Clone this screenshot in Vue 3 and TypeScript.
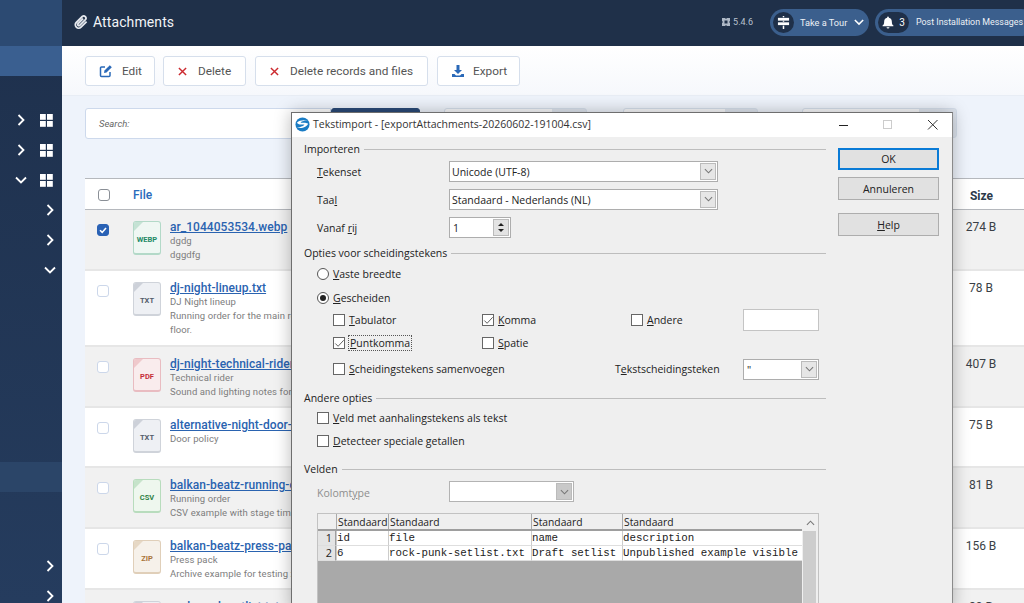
<script setup lang="ts">
interface Row { name: string; t1: string; t2?: string; t3?: string; ext: string; kind: string; size: string; checked?: boolean }
const rows: Row[] = [
  { name: 'ar_1044053534.webp', t1: 'dgdg', t2: 'dggdfg', ext: 'WEBP', kind: 'webp', size: '274 B', checked: true },
  { name: 'dj-night-lineup.txt', t1: 'DJ Night lineup', t2: 'Running order for the main room', t3: 'floor.', ext: 'TXT', kind: 'txt', size: '78 B' },
  { name: 'dj-night-technical-rider.pdf', t1: 'Technical rider', t2: 'Sound and lighting notes for the', ext: 'PDF', kind: 'pdf', size: '407 B' },
  { name: 'alternative-night-door-policy.txt', t1: 'Door policy', ext: 'TXT', kind: 'txt', size: '75 B' },
  { name: 'balkan-beatz-running-order.csv', t1: 'Running order', t2: 'CSV example with stage times', ext: 'CSV', kind: 'csv', size: '81 B' },
  { name: 'balkan-beatz-press-pack.zip', t1: 'Press pack', t2: 'Archive example for testing zip', ext: 'ZIP', kind: 'zip', size: '156 B' },
  { name: 'rock-punk-setlist.txt', t1: 'Draft setlist', ext: 'TXT', kind: 'txt', size: '89 B' }
]
const side = [
  { c: 'r', g: true }, { c: 'r', g: true }, { c: 'd', g: true },
  { c: 'r', sub: true }, { c: 'r', sub: true }, { c: 'd', sub: true }
]
const filters = [
  { w: 89, dark: true, gap: 24 },
  { w: 143, gap: 36 },
  { w: 135, gap: 44 },
  { w: 155, gap: 0 }
]
</script>

<template>
  <div class="page">
    <aside class="side">
      <div class="logo"></div>
      <div class="active"></div>
      <div class="menu">
        <div v-for="(s, i) in side" :key="i" class="mi" :class="{ sub: s.sub }">
          <svg class="chev" viewBox="0 0 12 12" width="12" height="12">
            <path v-if="s.c === 'r'" d="M3.5 1 8.5 6 3.5 11" />
            <path v-else d="M1 3.5 6 8.5 11 3.5" />
          </svg>
          <svg v-if="s.g" class="grid" viewBox="0 0 13 13" width="13" height="13">
            <rect x="0" y="0" width="5.8" height="5.8" /><rect x="7" y="0" width="5.8" height="5.8" />
            <rect x="0" y="7" width="5.8" height="5.8" /><rect x="7" y="7" width="5.8" height="5.8" />
          </svg>
        </div>
      </div>
      <div class="hilite"></div>
      <div class="mi sub low">
        <svg class="chev" viewBox="0 0 12 12" width="12" height="12"><path d="M3.5 1 8.5 6 3.5 11" /></svg>
      </div>
      <div class="mi sub">
        <svg class="chev" viewBox="0 0 12 12" width="12" height="12"><path d="M3.5 1 8.5 6 3.5 11" /></svg>
      </div>
    </aside>

    <main class="main">
      <header class="top">
        <svg class="clip" viewBox="0 0 16 16" width="16" height="16">
          <path d="M13.6 7.6 8 13.2a3.3 3.3 0 0 1-4.7-4.7l6-6a2.2 2.2 0 0 1 3.1 3.1l-5.7 5.7a1.1 1.1 0 0 1-1.6-1.6l5-5" />
        </svg>
        <span class="title">Attachments</span>
        <span class="spacer"></span>
        <span class="ver">
          <svg viewBox="0 0 10 10" width="10" height="10"><path d="M1 1h3l1 1 1-1h3v3L8 5l1 1v3H6L5 8 4 9H1V6l1-1-1-1zM3.500 3.500v3h3v-3z" /></svg>
          5.4.6
        </span>
        <span class="pill tour">
          <span class="disc">
            <svg viewBox="0 0 14 14" width="13" height="13">
              <rect x="6.200" y="0" width="1.600" height="1.400" />
              <rect x="1" y="2" width="12" height="3" />
              <rect x="6.200" y="5" width="1.600" height="1.200" />
              <rect x="1" y="6.800" width="12" height="3" />
              <rect x="6.200" y="10.400" width="1.600" height="3.600" />
            </svg>
          </span>
          <span class="ptext">Take a Tour</span>
          <svg class="pchev" viewBox="0 0 12 12" width="10" height="10"><path d="M1 3.500 6 8.500 11 3.500" /></svg>
        </span>
        <span class="pill post">
          <span class="disc wide">
            <svg viewBox="0 0 14 14" width="12" height="13"><path d="M7 0a1 1 0 0 1 1 1v.6c2.200.4 3.500 2.200 3.500 4.400 0 2.500.7 3.400 1.800 4.600.3.400 0 .9-.4.900H1.100c-.5 0-.7-.5-.4-.9C1.800 9.400 2.500 8.500 2.500 6c0-2.200 1.300-4 3.500-4.400V1a1 1 0 0 1 1-1zM5.300 12.500h3.400a1.700 1.500 0 0 1-3.400 0z" /></svg>
            <span class="num">3</span>
          </span>
          <span class="ptext">Post Installation Messages</span>
        </span>
      </header>

      <div class="toolbar">
        <button class="tb ed">
          <svg viewBox="0 0 14 14" width="14" height="14"><path class="ib" d="M11 8v3.500a1 1 0 0 1-1 1H2.500a1 1 0 0 1-1-1V4a1 1 0 0 1 1-1H6" /><path class="ibf" d="M5.500 6.500 10.800 1.200l2 2L7.500 8.500l-2.500.5z" /></svg>
          Edit
        </button>
        <button class="tb del">
          <svg viewBox="0 0 10 10" width="9" height="9"><path class="ix" d="M1 1 9 9M9 1 1 9" /></svg>
          <span class="pl">Delete</span>
        </button>
        <button class="tb dr">
          <svg viewBox="0 0 10 10" width="9" height="9"><path class="ix" d="M1 1 9 9M9 1 1 9" /></svg>
          <span class="pl">Delete records and files</span>
        </button>
        <button class="tb ex">
          <svg viewBox="0 0 14 14" width="14" height="14"><path class="ibf" d="M5.500 1h3v5h2.500L7 10 3 6h2.500zM1 10h2.500L5 11.500h4L10.500 10H13v3H1z" /></svg>
          <span>Export</span>
        </button>
      </div>

      <div class="content">
        <div class="searchrow">
          <div class="search">Search:</div>
          <div v-for="(f, i) in filters" :key="i" class="filter" :class="{ dark: f.dark }" :style="{ width: f.w + 'px', marginRight: f.gap + 'px' }"></div>
        </div>

        <div class="table">
          <div class="thead">
            <span class="cb hd"></span>
            <span class="thfile">File</span>
            <span class="thsize">Size</span>
          </div>
          <div v-for="(r, i) in rows" :key="i" class="row" :class="{ alt: i % 2 === 0 }">
            <span class="cb" :class="{ on: r.checked }">
              <svg v-if="r.checked" viewBox="0 0 12 12" width="12" height="12"><path d="M3 6.200 5.200 8.400 9 4" /></svg>
            </span>
            <span class="fi" :class="r.kind"><span class="fold"></span>{{ r.ext }}</span>
            <div class="info">
              <a class="fname">{{ r.name }}</a>
              <div class="sm">{{ r.t1 }}</div>
              <div v-if="r.t2" class="sm">{{ r.t2 }}</div>
              <div v-if="r.t3" class="sm t3">{{ r.t3 }}</div>
            </div>
            <span class="size">{{ r.size }}</span>
          </div>
        </div>
      </div>
    </main>

    <section class="dlg">
      <div class="dtitle">
        <svg class="lo" viewBox="0 0 16 16" width="15" height="15">
          <circle cx="8" cy="8" r="7.500" fill="#1a7cc4" />
          <path d="M2 6c3-3 8-3 12-2-3 0-7 0-8 2 3 0 7 0 8 1-1 4-8 6-12 4 3 0 7-1 8-3-3 0-7 0-8-2z" fill="#fff" />
        </svg>
        <span class="dt">Tekstimport - [exportAttachments-20260602-191004.csv]</span>
        <svg class="wb wmin" viewBox="0 0 12 12" width="12" height="12"><path d="M1 6.500h9" stroke="#222" /></svg>
        <svg class="wb wmax" viewBox="0 0 12 12" width="12" height="12"><rect x="1.500" y="1.500" width="8" height="8" fill="none" stroke="#ccc" /></svg>
        <svg class="wb last" viewBox="0 0 12 12" width="12" height="12"><path d="M1 1 10.500 10.500M10.500 1 1 10.500" stroke="#333" /></svg>
      </div>
      <div class="dbody">
        <div class="dleft">
          <div class="legend first"><span>Importeren</span></div>
          <div class="fr h28">
            <label class="fl"><u>T</u>ekenset</label>
            <span class="combo w269">Unicode (UTF-8)<span class="drop"><svg viewBox="0 0 10 6" width="9" height="6"><path d="M1 1 5 5 9 1" /></svg></span></span>
          </div>
          <div class="fr h28">
            <label class="fl">Taa<u>l</u></label>
            <span class="combo w269">Standaard - Nederlands (NL)<span class="drop"><svg viewBox="0 0 10 6" width="9" height="6"><path d="M1 1 5 5 9 1" /></svg></span></span>
          </div>
          <div class="fr h28">
            <label class="fl">Vanaf <u>r</u>ij</label>
            <span class="spin">1<span class="arrows"><i class="up"></i><i class="down"></i></span></span>
          </div>

          <div class="legend l2"><span>Opties voor scheidingstekens</span></div>
          <div class="rd r1"><span class="radio"></span><span><u>V</u>aste breedte</span></div>
          <div class="rd r2"><span class="radio sel"></span><span><u>G</u>escheiden</span></div>
          <div class="seps">
            <div class="ck c1"><span class="box"></span><span><u>T</u>abulator</span></div>
            <div class="ck c2"><span class="box"><svg viewBox="0 0 14 14" width="13" height="13"><path d="M2.500 7 5.500 10 11.500 3.500" /></svg></span><span><u>K</u>omma</span></div>
            <div class="ck c3"><span class="box"></span><span><u>A</u>ndere</span></div>
            <span class="inp"></span>
          </div>
          <div class="seps s2">
            <div class="ck c1"><span class="box"><svg viewBox="0 0 14 14" width="13" height="13"><path d="M2.500 7 5.500 10 11.500 3.500" /></svg></span><span class="focus"><u>P</u>untkomma</span></div>
            <div class="ck c2"><span class="box"></span><span><u>S</u>patie</span></div>
          </div>
          <div class="seps s3">
            <div class="ck merge"><span class="box"></span><span><u>S</u>cheidingstekens samenvoegen</span></div>
            <label class="tsep">T<u>e</u>kstscheidingsteken</label>
            <span class="combo small">"<span class="drop"><svg viewBox="0 0 10 6" width="9" height="6"><path d="M1 1 5 5 9 1" /></svg></span></span>
          </div>

          <div class="legend l3"><span>Andere opties</span></div>
          <div class="ck opt o1"><span class="box"></span><span><u>V</u>eld met aanhalingstekens als tekst</span></div>
          <div class="ck opt o2"><span class="box"></span><span><u>D</u>etecteer speciale getallen</span></div>

          <div class="legend l4"><span>Velden</span></div>
          <div class="fr kol">
            <label class="fl dis">Kolomt<u>y</u>pe</label>
            <span class="combo off">&nbsp;<span class="drop"><svg viewBox="0 0 10 6" width="9" height="6"><path d="M1 1 5 5 9 1" /></svg></span></span>
          </div>
          <div class="grid-wrap">
            <div class="gtable">
              <div class="gh">
                <span class="g0"></span><span class="g1">Standaard</span><span class="g2">Standaard</span><span class="g3">Standaard</span><span class="g4">Standaard</span>
              </div>
              <div class="gr">
                <span class="g0 n">1</span><span class="g1">id</span><span class="g2">file</span><span class="g3">name</span><span class="g4">description</span>
              </div>
              <div class="gr">
                <span class="g0 n">2</span><span class="g1">6</span><span class="g2">rock-punk-setlist.txt</span><span class="g3">Draft setlist</span><span class="g4">Unpublished example visible</span>
              </div>
              <div class="gempty"></div>
            </div>
            <div class="sbar">
              <span class="sup"><svg viewBox="0 0 10 6" width="9" height="6"><path d="M1 5 5 1 9 5" /></svg></span>
              <span class="strack"></span>
            </div>
          </div>
        </div>
        <div class="dright">
          <button class="wbtn ok">OK</button>
          <button class="wbtn">Annuleren</button>
          <button class="wbtn help"><u>H</u>elp</button>
        </div>
      </div>
    </section>
  </div>
</template>

<style>
html, body { margin: 0; padding: 0; overflow: hidden; }
</style>

<style scoped>
.page { position: relative; width: 1024px; height: 603px; overflow: hidden; display: flex; background: #eef3fb; font-family: Roboto, "Liberation Sans", sans-serif; color: #333; }

.side { width: 62px; flex: none; height: 603px; background: linear-gradient(180deg, #1e304c 0%, #253c5e 100%); display: flex; flex-direction: column; }
.side > * { flex: none; }
.logo { height: 46px; background: #2c4a72; }
.active { height: 30px; background: #3a5f90; }
.menu { margin-top: 29px; }
.mi { height: 30px; display: flex; align-items: center; position: relative; }
.chev { position: absolute; left: 15px; top: 9px; fill: none; stroke: #fff; stroke-width: 1.8; }
.mi.sub .chev { left: 44px; }
.grid { position: absolute; left: 40px; top: 9px; fill: #fff; }
.hilite { height: 30px; margin-top: 177px; background: #2b4568; }
.low { margin-top: 59px; }

.main { flex: 1; min-width: 0; display: flex; flex-direction: column; }
.top { height: 46px; flex: none; box-sizing: border-box; padding-bottom: 2px; background: #1f3049; color: #fff; display: flex; align-items: center; padding-left: 11px; }
.clip { fill: none; stroke: #e6e9ef; stroke-width: 1.8; margin-right: 4px; }
.title { font-size: 14px; letter-spacing: .1px; color: #f2f4f7; }
.spacer { flex: 1; }
.ver { font-size: 9px; color: #b9c2cf; display: flex; align-items: center; gap: 2px; margin-right: 17px; }
.ver svg { fill: #aeb8c6; fill-rule: evenodd; }
.pill { height: 27px; background: #3b5f8d; border-radius: 14px; display: flex; align-items: center; font-size: 9.200px; color: #edf1f6; box-sizing: border-box; padding-left: 3px; }
.tour { width: 99px; margin-right: 6px; }
.post { width: 160px; margin-right: -11px; font-size: 8.900px; }
.disc { width: 21px; height: 21px; border-radius: 11px; background: #1f3049; display: flex; align-items: center; justify-content: center; flex: none; }
.disc svg { fill: #fff; }
.disc.wide { width: 31px; gap: 5px; }
.num { font-size: 10px; color: #fff; }
.tour .ptext { margin-left: 6px; }
.post .ptext { margin-left: 7px; white-space: nowrap; }
.pchev { margin-left: 7px; fill: none; stroke: #fff; stroke-width: 1.8; }

.toolbar { height: 50px; flex: none; box-sizing: border-box; background: linear-gradient(180deg, #fff 0%, #f6f8fc 100%); display: flex; align-items: flex-start; gap: 8px; padding: 10px 0 0 23px; border-bottom: 1px solid #e8edf5; }
.tb { height: 30px; box-sizing: border-box; background: #fff; border: 1px solid #d6dfec; border-radius: 3px; font: 11.800px Roboto, sans-serif; color: #555; padding: 0 0 0 13px; display: flex; align-items: center; gap: 9px; white-space: nowrap; }
.tb svg { flex: none; }
.tb .pl { margin-left: 2px; }
.ed { width: 70px; }
.del { width: 83px; padding-left: 14px; }
.dr { width: 173px; padding-left: 14px; margin-left: 1px; }
.ex { width: 83px; gap: 8px; margin-left: 1px; }
.ib { fill: none; stroke: #2a69b8; stroke-width: 1.500; }
.ibf { fill: #2a69b8; }
.ix { fill: none; stroke: #cc2a2f; stroke-width: 1.600; }

.content { flex: 1; padding: 12px 0 0 23px; }
.searchrow { display: flex; height: 30px; }
.search { background: #fff; border: 1px solid #cdd9ec; border-radius: 3px 0 0 3px; font-size: 9.500px; font-style: italic; color: #666; padding-left: 13px; line-height: 30px; height: 29px; width: 231px; flex: none; }
.filter { height: 30px; flex: none; box-sizing: border-box; background: linear-gradient(90deg, #f8f9fb 76%, #dfe5ee 76%); border: 1px solid #d6dfec; border-radius: 3px; }
.filter.dark { background: #2a4a78; border-color: #2a4a78; }
.table { margin-top: 40px; background: #fff; }
.thead { height: 32px; box-sizing: border-box; border-top: 1px solid #b5b8bd; border-bottom: 1px solid #b5b8bd; display: flex; align-items: center; padding: 2px 0 0 13px; background: #fff; position: relative; }
.thfile { margin-left: 23px; color: #2a6bbb; font-weight: 500; font-size: 12px; }
.thsize { position: absolute; right: 31px; top: 10px; font-size: 12px; font-weight: 700; color: #2c3a4a; }
.cb { width: 12px; height: 12px; box-sizing: border-box; border: 1px solid #ccd7ea; border-radius: 3px; background: #fff; flex: none; display: block; }
.cb.hd { border-color: #8a8f96; }
.cb.on { background: #2a62b5; border-color: #2a62b5; }
.cb.on svg { display: block; margin: -1px; fill: none; stroke: #fff; stroke-width: 1.600; }
.row { display: flex; align-items: flex-start; border-bottom: 2px solid #e6e6e6; padding: 10px 0 5px 12px; position: relative; min-height: 44px; background: #fff; }
.row:nth-child(5) { min-height: 43px; }
.row.alt { background: #f1f1f1; }
.row .cb { margin-top: 4px; }
.fi { margin-left: 24px; margin-top: 1px; width: 28px; height: 34px; box-sizing: border-box; border: 1px solid #cfd3da; border-bottom-width: 2px; border-radius: 3px; background: #eef0f4; position: relative; flex: none; font-size: 7.500px; font-weight: 700; color: #555d6b; display: flex; align-items: center; justify-content: center; padding-top: 4px; }
.fold { position: absolute; left: 0; top: 0; width: 0; height: 0; border-style: solid; border-width: 9px 9px 0 0; border-color: #cdd1d9 transparent transparent transparent; border-radius: 2px 0 0 0; }
.fi.webp { background: #eff7f3; border-color: #b3d9c8; color: #1f8a66; }
.fi.webp .fold { border-top-color: #c5e2d4; }
.fi.pdf { background: #f9eced; border-color: #e9bcc1; color: #c62f3a; }
.fi.pdf .fold { border-top-color: #efc9cc; }
.fi.csv { background: #eef7ee; border-color: #b8dcbd; color: #2f8145; }
.fi.csv .fold { border-top-color: #c6e3ca; }
.fi.zip { background: #f6f1ea; border-color: #e0cfb9; color: #a9743a; }
.fi.zip .fold { border-top-color: #e6d8c5; }
.info { margin-left: 9px; white-space: nowrap; width: 240px; }
.fname { display: block; color: #2a63b0; font-size: 12px; font-weight: 500; text-decoration: underline; line-height: 14px; letter-spacing: .05px; }
.sm { font-size: 9.500px; color: #7d7d7d; line-height: 14px; letter-spacing: .1px; }
.t3 { padding-bottom: 3px; }
.size { position: absolute; right: 24px; top: 10px; font-size: 12px; color: #3a3f46; width: 38px; text-align: center; }

.dlg { position: absolute; left: 291px; top: 112px; width: 662px; height: 500px; box-sizing: border-box; background: #efefef; border: 1px solid #6e6e6e; border-right-color: #8a8a8a; box-shadow: 0 0 16px rgba(0,0,0,.28); font-family: "Open Sans", "Noto Sans", sans-serif; font-size: 10.500px; color: #222; }
.dtitle { height: 24px; background: #fff; display: flex; align-items: center; padding: 0 0 2px 3px; box-sizing: border-box; }
.lo { flex: none; margin-right: 3px; }
.dt { flex: 1; white-space: nowrap; font-size: 10.500px; color: #333; }
.wb { flex: none; margin-top: 2px; }
.wmin { margin-right: 32px; }
.wmax { margin-right: 33px; }
.wb.last { margin-right: 13px; }
.wb path { fill: none; }
.dbody { display: flex; }
.dleft { width: 522px; margin-left: 12px; flex: none; }
.legend { display: flex; align-items: center; height: 16px; gap: 4px; }
.legend span { flex: none; }
.legend::after { content: ""; flex: 1; height: 0; border-top: 1px solid #bdbdbd; }
.legend.first { margin-top: 4px; }
.l2 { margin-top: 4px; }
.fr { display: flex; align-items: center; }
.h28 { height: 28px; }
.fr .fl { width: 132px; margin-left: 13px; padding-top: 2px; flex: none; }
.combo { position: relative; display: block; height: 21px; box-sizing: border-box; background: #fff; border: 1px solid #adadad; padding-left: 2px; line-height: 21px; white-space: nowrap; }
.w269 { width: 269px; }
.drop { position: absolute; right: 1px; top: 1px; bottom: 1px; width: 16px; background: #e6e6e6; border: 1px solid #bbb; box-sizing: border-box; display: flex; align-items: center; justify-content: center; }
.drop svg, .sup svg { fill: none; stroke: #777; stroke-width: 1.200; }
.spin { position: relative; display: block; width: 62px; height: 21px; box-sizing: border-box; background: #fff; border: 1px solid #adadad; padding-left: 3px; line-height: 21px; }
.arrows { position: absolute; right: 1px; top: 1px; bottom: 1px; width: 16px; background: #e3e3e3; border: 1px solid #bbb; box-sizing: border-box; display: flex; flex-direction: column; align-items: center; justify-content: center; gap: 3px; }
.up, .down { width: 0; height: 0; border-left: 3px solid transparent; border-right: 3px solid transparent; display: block; }
.up { border-bottom: 3px solid #222; }
.down { border-top: 3px solid #222; }

.rd { display: flex; align-items: center; margin-left: 13px; height: 16px; gap: 4px; }
.r1 { margin-top: 5px; }
.r2 { margin-top: 8px; }
.radio { width: 12px; height: 12px; box-sizing: border-box; border: 1px solid #555; background: #fff; border-radius: 50%; position: relative; flex: none; }
.radio.sel::after { content: ""; position: absolute; inset: 2px; background: #222; border-radius: 50%; }
.seps { display: flex; align-items: center; height: 22px; margin-top: 3px; margin-left: 29px; position: relative; }
.s2 { margin-top: 1px; }
.s3 { margin-top: 4px; }
.ck { display: flex; align-items: center; gap: 2px; flex: none; }
.c1 { width: 149px; }
.c2 { width: 149px; }
.c3 { width: 112px; }
.merge { width: 282px; }
.box { width: 12px; height: 12px; box-sizing: border-box; background: #fff; border: 1px solid #666; flex: none; margin-right: 2px; display: block; }
.box svg { display: block; margin: -1px; fill: none; stroke: #555; stroke-width: 1; }
.focus { outline: 1px dotted #555; padding: 0 1px; }
.inp { width: 76px; height: 22px; box-sizing: border-box; background: #fff; border: 1px solid #c4c4c4; }
.tsep { width: 128px; flex: none; }
.small { width: 76px; padding-left: 3px; }
.l3 { margin-top: 10px; }
.opt { margin-left: 13px; height: 16px; }
.o1 { margin-top: 4px; }
.o2 { margin-top: 7px; }
.l4 { margin-top: 12px; }
.kol { margin-top: 4px; height: 21px; }
.dis { color: #8e8e8e; }
.off { width: 125px; border-color: #b3b3b3; }
.off .drop { background: #c9c9c9; }
.grid-wrap { margin-top: 11px; margin-left: 13px; width: 502px; height: 200px; box-sizing: border-box; border: 1px solid #c2c2c2; display: flex; }
.gtable { flex: 1; display: flex; flex-direction: column; min-width: 0; }
.gh { display: flex; flex: none; height: 15px; border-bottom: 2px solid #9e9e9e; box-sizing: content-box; background: #efefef; font-size: 10.300px; line-height: 16px; white-space: nowrap; }
.gh span { border-left: 1px solid #aaa; box-sizing: border-box; padding-left: 1px; overflow: hidden; }
.gr { display: flex; flex: none; height: 15px; font-family: "Liberation Mono", monospace; font-size: 10.800px; line-height: 14px; background: #fff; white-space: nowrap; }
.gr span { border-left: 1px solid #ccc; box-sizing: border-box; overflow: hidden; border-bottom: 1px solid #dedede; }
.g0 { width: 18px; flex: none; border-left: 0 !important; }
.g1 { width: 52px; flex: none; }
.g2 { width: 143px; flex: none; }
.g3 { width: 91px; flex: none; }
.g4 { flex: 1; }
.n { background: #e4e4e4; border-right: 1px solid #9e9e9e; text-align: right; font-family: "Open Sans", sans-serif; padding-right: 3px; }
.gempty { flex: 1; background: #a9a9a9; }
.sbar { width: 16px; display: flex; flex-direction: column; background: #efefef; flex: none; }
.sup { height: 17px; flex: none; display: flex; align-items: center; justify-content: center; }
.strack { flex: 1; background: #cdcdcd; margin: 0 2px 0 1px; }

.dright { margin-left: 12px; width: 101px; display: flex; flex-direction: column; padding-top: 11px; }
.wbtn { height: 23px; width: 101px; flex: none; box-sizing: border-box; background: #e1e1e1; border: 1px solid #adadad; font: 10.500px "Open Sans", sans-serif; color: #222; padding: 0; margin-bottom: 7px; }
.ok { border: 2px solid #0a7bd6; height: 22px; }
.help { margin-top: 6px; }
</style>
